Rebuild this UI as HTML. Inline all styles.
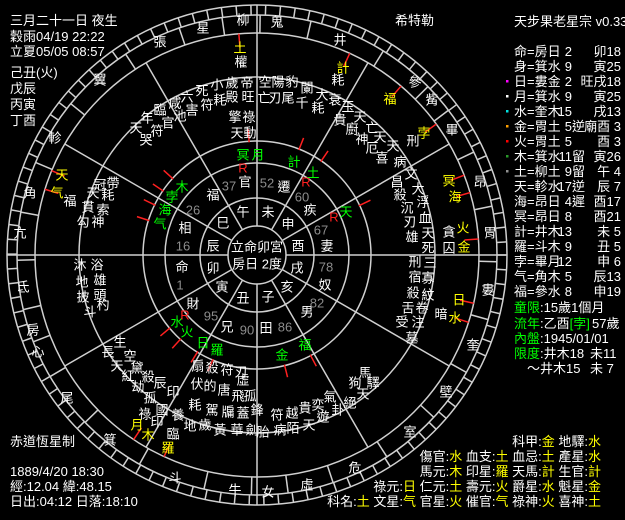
<!DOCTYPE html>
<html><head><meta charset="utf-8">
<style>
html,body{margin:0;padding:0;background:#000;width:625px;height:520px;overflow:hidden}
svg{position:absolute;left:0;top:0}
text{font-family:"Liberation Sans","Noto Sans CJK TC","WenQuanYi Zen Hei",sans-serif;font-size:13px;fill:#fff}
.c{text-anchor:middle;dominant-baseline:central}
.y{fill:#ffff00}.g{fill:#00ff00}.r{fill:#ff2020}.gr{fill:#8c8c8c}
</style></head><body>
<svg id="s" width="625" height="520" viewBox="0 0 625 520" xmlns="http://www.w3.org/2000/svg">
<g id="geo" stroke="#d0d0d0" stroke-width="1.5" fill="none">
<circle cx="257" cy="255" r="29"/>
<circle cx="257" cy="255" r="57"/>
<circle cx="257" cy="255" r="92"/>
<circle cx="257" cy="255" r="114"/>
<circle cx="257" cy="255" r="178"/>
<circle cx="257" cy="255" r="222"/>
<circle cx="257" cy="255" r="240"/>
<circle cx="257" cy="255" r="250"/>
</g>
<g id="red" stroke="#ff2020" stroke-width="1.5"></g>

<g font-size="14">
<text x="10" y="25">三月二十一日 夜生</text>
<text x="10" y="41">穀雨04/19 22:22</text>
<text x="10" y="56">立夏05/05 08:57</text>
<text x="10" y="77">己丑(火)</text>
<text x="10" y="93">戊辰</text>
<text x="10" y="109">丙寅</text>
<text x="10" y="125">丁酉</text>
<text x="10" y="446">赤道恆星制</text>
<text x="10" y="476">1889/4/20 18:30</text>
<text x="10" y="491">經:12.04 緯:48.15</text>
<text x="10" y="506">日出:04:12 日落:18:10</text>
<text x="395" y="25">希特勒</text>
</g>
<text x="514" y="26" font-size="13">天步果老星宗 v0.33</text>

<g id="list" font-size="13.5"></g>
<g font-size="13">
<text x="514" y="312" class="g">童限<tspan fill="#fff">:15歲1個月</tspan></text>
<text x="514" y="328" class="g">流年<tspan fill="#fff">:乙酉</tspan><tspan fill="#00ff00">[孛]</tspan><tspan fill="#fff" x="592">57歲</tspan></text>
<text x="514" y="343" class="g">內盤<tspan fill="#fff">:1945/01/01</tspan></text>
<text x="514" y="358" class="g">限度<tspan fill="#fff">:井木18</tspan><tspan fill="#fff" x="590">未11</tspan></text>
<text x="527" y="373">～井木15<tspan x="590">未 7</tspan></text>
</g>

<g font-size="13" text-anchor="end">
<text x="601" y="446">科甲:<tspan class="y">金</tspan> 地驛:<tspan class="y">水</tspan></text>
<text x="601" y="461">傷官:<tspan class="y">水</tspan> 血支:<tspan class="y">土</tspan> 血忌:<tspan class="y">土</tspan> 產星:<tspan class="y">水</tspan></text>
<text x="601" y="476">馬元:<tspan class="y">木</tspan> 印星:<tspan class="y">羅</tspan> 天馬:<tspan class="y">計</tspan> 生官:<tspan class="y">計</tspan></text>
<text x="601" y="491">祿元:<tspan class="y">日</tspan> 仁元:<tspan class="y">土</tspan> 壽元:<tspan class="y">火</tspan> 爵星:<tspan class="y">水</tspan> 魁星:<tspan class="y">金</tspan></text>
<text x="601" y="506">科名:<tspan class="y">土</tspan> 文星:<tspan class="y">气</tspan> 官星:<tspan class="y">火</tspan> 催官:<tspan class="y">气</tspan> 祿神:<tspan class="y">火</tspan> 喜神:<tspan class="y">土</tspan></text>
</g>

<text x="257" y="247" class="c">立命卯宮</text>
<text x="257" y="264" class="c">房日 2度</text>

<g>
<text x="223" y="223" class="c">巳</text><text x="243" y="212" class="c">午</text><text x="268" y="212" class="c">未</text>
<text x="288" y="224" class="c">申</text><text x="298" y="246" class="c">酉</text><text x="297" y="268" class="c">戌</text>
<text x="287" y="287" class="c">亥</text><text x="268" y="297" class="c">子</text><text x="243" y="298" class="c">丑</text>
<text x="222" y="287" class="c">寅</text><text x="213" y="268" class="c">卯</text><text x="213" y="246" class="c">辰</text>
</g>
<text x="213" y="195" class="c">福</text><text x="193" y="210" class="c gr">26</text>
<text x="245" y="182" class="c">官</text><text x="229" y="186" class="c gr">37</text>
<text x="284" y="187" class="c">遷</text><text x="267" y="183" class="c gr">52</text>
<text x="310" y="210" class="c">疾</text><text x="302" y="197" class="c gr">60</text>
<text x="327" y="246" class="c">妻</text><text x="321" y="230" class="c gr">67</text>
<text x="325" y="285" class="c">奴</text><text x="326" y="267" class="c gr">78</text>
<text x="307" y="312" class="c">男</text><text x="317" y="303" class="c gr">82</text>
<text x="266" y="328" class="c">田</text><text x="285" y="327" class="c gr">86</text>
<text x="227" y="327" class="c">兄</text><text x="247" y="330" class="c gr">90</text>
<text x="193" y="304" class="c">財</text><text x="211" y="316" class="c gr">95</text>
<text x="182" y="267" class="c">命</text><text x="180" y="285" class="c gr">1</text>
<text x="185" y="228" class="c">相</text><text x="183" y="246" class="c gr">16</text>

<g>
<text x="243" y="155" class="c g">冥</text><text x="258" y="155" class="c g">月</text><text x="243" y="168" class="c r">R</text>
<text x="294" y="162" class="c g">計</text>
<text x="313" y="173" class="c g">土</text><text x="306" y="182" class="c r">R</text>
<text x="346" y="212" class="c g">天</text><text x="334" y="217" class="c r">R</text>
<text x="182" y="187" class="c g">木</text><text x="172" y="197" class="c g">孛</text><text x="165" y="210" class="c g">海</text><text x="160" y="224" class="c g">气</text>
<text x="177" y="322" class="c g">水</text><text x="187" y="332" class="c g">火</text><text x="185" y="315" class="c r">R</text>
<text x="203" y="343" class="c g">日</text><text x="217" y="350" class="c g">羅</text>
<text x="305" y="345" class="c g">福</text><text x="282" y="355" class="c g">金</text>
</g>
<g>
<text x="240" y="48" class="c y">土</text><text x="241" y="62" class="c">權</text>
<text x="343" y="68" class="c y">計</text><text x="338" y="80" class="c">耗</text>
<text x="390" y="99" class="c y">福</text>
<text x="424" y="133" class="c y">孛</text><text x="413" y="141" class="c">刑</text>
<text x="449" y="181" class="c y">冥</text><text x="455" y="197" class="c y">海</text>
<text x="463" y="228" class="c y">火</text><text x="464" y="247" class="c y">金</text><text x="449" y="232" class="c">貪</text><text x="449" y="248" class="c">囚</text>
<text x="459" y="300" class="c y">日</text><text x="455" y="318" class="c y">水</text><text x="441" y="314" class="c">暗</text>
<text x="168" y="448" class="c y">羅</text><text x="137" y="425" class="c y">月</text><text x="148" y="435" class="c y">木</text>
<text x="145" y="414" class="c">祿</text><text x="157" y="422" class="c">印</text><text x="173" y="434" class="c">臨</text>
<text x="62" y="175" class="c y">天</text><text x="57" y="193" class="c y">气</text><text x="70" y="201" class="c">福</text>
</g>
<g>
<text x="217" y="85" class="c">小</text><text x="232" y="83" class="c">歲</text><text x="247" y="83" class="c">帝</text>
<text x="220" y="100" class="c">耗</text><text x="232" y="97" class="c">殿</text><text x="248" y="97" class="c">旺</text>
<text x="202" y="91" class="c">死</text><text x="207" y="105" class="c">符</text>
<text x="187" y="97" class="c">六</text><text x="192" y="110" class="c">害</text>
<text x="175" y="103" class="c">咸</text><text x="180" y="116" class="c">池</text>
<text x="160" y="110" class="c">臨</text><text x="168" y="123" class="c">官</text>
<text x="147" y="118" class="c">年</text><text x="157" y="131" class="c">符</text>
<text x="136" y="128" class="c">天</text><text x="146" y="140" class="c">哭</text>
<text x="235" y="117" class="c">擎</text><text x="249" y="117" class="c">祿</text>
<text x="237" y="133" class="c">天</text><text x="250" y="133" class="c">動</text>
<text x="265" y="82" class="c">空</text><text x="278" y="82" class="c">陽</text><text x="292" y="82" class="c">豹</text>
<text x="264" y="98" class="c">亡</text><text x="275" y="98" class="c">刃</text><text x="288" y="98" class="c">尾</text>
<text x="307" y="88" class="c">闌</text><text x="302" y="103" class="c">千</text><text x="322" y="95" class="c">大</text>
<text x="318" y="108" class="c">耗</text><text x="335" y="100" class="c">衰</text>
<text x="348" y="107" class="c">玉</text><text x="340" y="120" class="c">貴</text><text x="360" y="117" class="c">天</text>
<text x="352" y="129" class="c">廚</text><text x="372" y="128" class="c">亡</text><text x="362" y="139" class="c">神</text>
<text x="380" y="137" class="c">天</text><text x="372" y="148" class="c">厄</text><text x="393" y="146" class="c">天</text><text x="382" y="158" class="c">喜</text>
<text x="400" y="162" class="c">病</text><text x="411" y="174" class="c">文</text><text x="397" y="182" class="c">昌</text>
<text x="418" y="189" class="c">大</text><text x="400" y="195" class="c">殺</text><text x="423" y="202" class="c">浮</text>
<text x="407" y="208" class="c">沉</text><text x="425" y="218" class="c">血</text><text x="410" y="222" class="c">刃</text>
<text x="428" y="233" class="c">天</text><text x="412" y="237" class="c">雄</text><text x="428" y="248" class="c">死</text>
<text x="415" y="262" class="c">刑</text><text x="430" y="263" class="c">三</text>
<text x="415" y="277" class="c">宿</text><text x="428" y="278" class="c">寡</text>
<text x="413" y="293" class="c">殺</text><text x="428" y="295" class="c">紋</text>
<text x="408" y="308" class="c">舌</text><text x="422" y="308" class="c">卷</text>
<text x="402" y="322" class="c">受</text><text x="418" y="322" class="c">注</text><text x="412" y="338" class="c">墓</text>
<text x="365" y="373" class="c">馬</text><text x="355" y="383" class="c">狗</text><text x="373" y="383" class="c">驛</text>
<text x="363" y="394" class="c">天</text><text x="350" y="403" class="c">絕</text><text x="330" y="397" class="c">氣</text>
<text x="338" y="410" class="c">卦</text><text x="318" y="405" class="c">奕</text><text x="323" y="417" class="c">遊</text>
<text x="305" y="408" class="c">貴</text><text x="292" y="413" class="c">越</text><text x="277" y="415" class="c">符</text>
<text x="309" y="425" class="c">天</text><text x="293" y="428" class="c">陌</text><text x="280" y="430" class="c">病</text><text x="263" y="432" class="c">胎</text>
<text x="100" y="185" class="c">冠</text><text x="113" y="183" class="c">帶</text>
<text x="93" y="193" class="c">天</text><text x="108" y="195" class="c">耗</text>
<text x="88" y="207" class="c">貫</text><text x="103" y="210" class="c">索</text>
<text x="83" y="222" class="c">勾</text><text x="98" y="222" class="c">神</text>
<text x="80" y="265" class="c">沐</text><text x="97" y="265" class="c">浴</text>
<text x="82" y="282" class="c">地</text><text x="100" y="280" class="c">雄</text>
<text x="83" y="297" class="c">披</text><text x="100" y="295" class="c">頭</text>
<text x="90" y="312" class="c">斗</text><text x="103" y="305" class="c">杓</text>
<text x="120" y="342" class="c">生</text><text x="108" y="352" class="c">長</text><text x="130" y="356" class="c">空</text>
<text x="117" y="366" class="c">天</text><text x="137" y="368" class="c">黛</text>
<text x="128" y="376" class="c">紅</text><text x="148" y="377" class="c">殺</text><text x="160" y="383" class="c">辰</text>
<text x="138" y="387" class="c">劫</text><text x="173" y="392" class="c">印</text>
<text x="150" y="398" class="c">孤</text><text x="162" y="410" class="c">國</text>
<text x="198" y="366" class="c">扇</text><text x="212" y="368" class="c">殺</text><text x="227" y="370" class="c">符</text><text x="241" y="372" class="c">刃</text><text x="243" y="380" class="c">虛</text>
<text x="197" y="384" class="c">伏</text><text x="210" y="386" class="c">的</text><text x="224" y="390" class="c">唐</text><text x="238" y="396" class="c">飛</text><text x="250" y="396" class="c">孤</text>
<text x="195" y="405" class="c">耗</text><text x="212" y="410" class="c">駕</text><text x="228" y="412" class="c">牖</text><text x="243" y="413" class="c">蓋</text><text x="257" y="410" class="c">鋒</text>
<text x="178" y="415" class="c">養</text><text x="190" y="426" class="c">地</text><text x="205" y="425" class="c">歲</text><text x="220" y="430" class="c">黃</text><text x="237" y="430" class="c">華</text><text x="252" y="430" class="c">劍</text>
</g>
<g id="mans">
<text x="243" y="20" class="c">柳</text><text x="277" y="22" class="c">鬼</text><text x="340" y="40" class="c">井</text>
<text x="415" y="82" class="c">參</text><text x="432" y="100" class="c">觜</text><text x="452" y="130" class="c">畢</text>
<text x="480" y="182" class="c">昂</text><text x="490" y="233" class="c">胃</text><text x="488" y="290" class="c">婁</text>
<text x="473" y="345" class="c">奎</text><text x="446" y="392" class="c">壁</text><text x="410" y="432" class="c">室</text>
<text x="355" y="468" class="c">危</text><text x="307" y="485" class="c">虛</text><text x="268" y="492" class="c">女</text>
<text x="235" y="490" class="c">牛</text><text x="175" y="478" class="c">斗</text><text x="110" y="440" class="c">箕</text>
<text x="67" y="398" class="c">尾</text><text x="38" y="352" class="c">心</text><text x="33" y="330" class="c">房</text>
<text x="23" y="287" class="c">氐</text><text x="20" y="233" class="c">亢</text><text x="30" y="193" class="c">角</text>
<text x="55" y="138" class="c">軫</text><text x="100" y="80" class="c">翼</text><text x="160" y="42" class="c">張</text><text x="203" y="28" class="c">星</text>
</g>
</svg>
<script>
(function(){
var NS="http://www.w3.org/2000/svg",cx=257,cy=255;
var geo=document.getElementById("geo"),red=document.getElementById("red");
function ln(g,a,r1,r2,col){var l=document.createElementNS(NS,"line");var c=Math.cos(a),s=Math.sin(a);
l.setAttribute("x1",cx+r1*c);l.setAttribute("y1",cy+r1*s);l.setAttribute("x2",cx+r2*c);l.setAttribute("y2",cy+r2*s);if(col)l.setAttribute("stroke",col);g.appendChild(l);}
for(var i=0;i<12;i++){var a=i*Math.PI/6;ln(geo,a,29,(i%3==0)?250:222);}
for(var d=0;d<360;d+=3.4){ln(geo,d*Math.PI/180,240,250);}
var m=[[243,20],[277,22],[340,40],[415,82],[432,100],[452,130],[480,182],[490,233],[488,290],[473,345],[446,392],[410,432],[355,468],[307,485],[268,492],[235,490],[175,478],[110,440],[67,398],[38,352],[33,330],[23,287],[20,233],[30,193],[55,138],[100,80],[160,42],[203,28]];
var ang=m.map(function(p){return Math.atan2(p[1]-cy,p[0]-cx);});
for(var i=0;i<ang.length;i++){var a1=ang[i],a2=ang[(i+1)%ang.length];var d=a2-a1;while(d>Math.PI)d-=2*Math.PI;while(d<-Math.PI)d+=2*Math.PI;ln(geo,a1+d/2,222,240);}
var gp=[[250,155],[294,162],[313,173],[346,212],[182,187],[172,197],[165,210],[160,224],[177,322],[187,332],[203,343],[217,350],[305,345],[282,355]];
gp.forEach(function(p){var a=Math.atan2(p[1]-cy,p[0]-cx);ln(red,a,113,126);});
var yp=[[240,48],[343,68],[390,99],[424,133],[449,181],[455,197],[464,240],[459,300],[455,318],[168,448],[140,430],[62,175],[57,193]];
yp.forEach(function(p){var a=Math.atan2(p[1]-cy,p[0]-cx);ln(red,a,208,222);});
var L=[["命=房日","2","","卯18",""],["身=箕水","9","","寅25",""],["日=婁金","2","","旺戌18","#ff00ff"],["月=箕水","9","","寅25","#fff"],["水=奎木","15","","戌13","#00e0e0"],["金=胃土","5","逆","廟酉 3","#ffa000"],["火=胃土","5","","酉 3","#ff0000"],["木=箕水","11","留","寅26","#2a9a2a"],["土=柳土","9","留","午 4","#909090"],["天=軫水","17","逆","辰 7",""],["海=昂日","4","遲","酉17",""],["冥=昂日","8","","酉21",""],["計=井木","13","","未 5",""],["羅=斗木","9","","丑 5",""],["孛=畢月","12","","申 6",""],["气=角木","5","","辰13",""],["福=參水","8","","申19",""]];
var g=document.getElementById("list");
function tx(x,y,s,fill,anchor){var t=document.createElementNS(NS,"text");t.setAttribute("x",x);t.setAttribute("y",y);t.setAttribute("font-size","13.5");t.style.whiteSpace="pre";if(fill)t.setAttribute("fill",fill);if(anchor)t.setAttribute("text-anchor",anchor);t.textContent=s;g.appendChild(t);}
L.forEach(function(r,i){var y=56+i*15;tx(514,y,r[0],"#ffff00");tx(572,y,r[1],"#ffff00","end");if(r[2])tx(572,y,r[2],"#ff2020");tx(621,y,r[3],"#fff","end");
if(r[4]){var q=document.createElementNS(NS,"rect");q.setAttribute("x",506);q.setAttribute("y",y-6);q.setAttribute("width",2.5);q.setAttribute("height",2.5);q.setAttribute("fill",r[4]);g.appendChild(q);}});
})();
</script>
</body></html>
